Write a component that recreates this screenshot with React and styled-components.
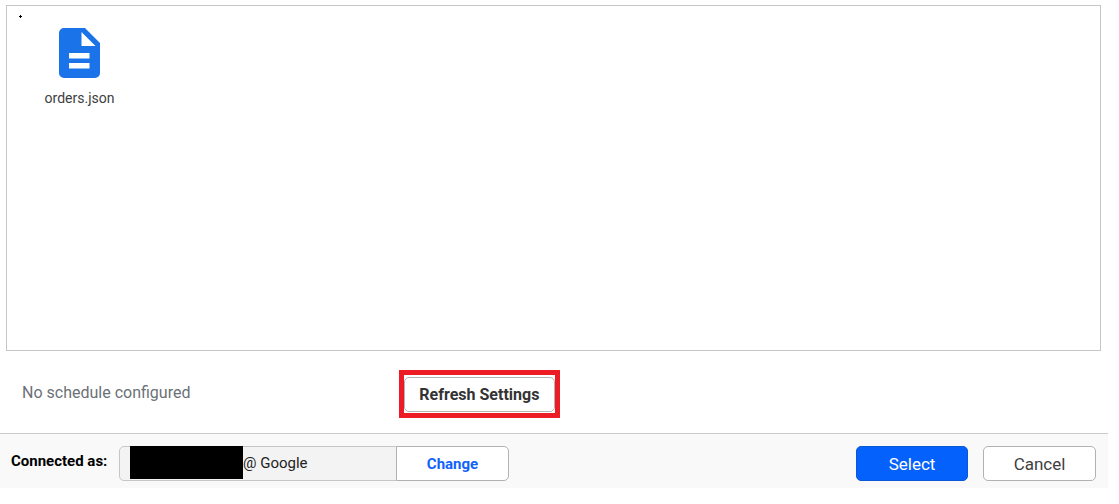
import React from 'react';
import styled, { createGlobalStyle, css } from 'styled-components';

const GlobalStyle = createGlobalStyle`
  *, *::before, *::after { box-sizing: border-box; }
  body {
    margin: 0;
    background: #fff;
    color: #404040;
    font-family: Roboto, "Liberation Sans", sans-serif;
    font-size: 14px;
    line-height: 20px;
  }
`;

const Dialog = styled.main`
  display: flex;
  flex-direction: column;
  margin-right: 11px;
`;

const FileBrowser = styled.section`
  min-height: 346px;
  margin: 5px 7px 0 6px;
  border: 1px solid #c6c6c6;
`;

const Path = styled.div`
  display: flex;
  height: 22px;
  padding: 9px 12px 0;
`;

const PathDot = styled.svg`
  display: block;
  width: 3px;
  height: 3px;
`;

const FileList = styled.ul`
  display: flex;
  flex-wrap: wrap;
  margin: 0;
  padding: 0 12px;
  list-style: none;
`;

const FileItem = styled.li`
  display: flex;
  flex-direction: column;
  align-items: center;
  gap: 10px;
  width: 121px;
`;

const FileIcon = styled.svg`
  display: block;
  width: 41px;
  height: 50px;
`;

const ScheduleRow = styled.section`
  display: grid;
  grid-template-columns: 36% 1fr;
  align-items: center;
  padding: 19px 0 15px;
`;

const ScheduleText = styled.p`
  margin: 0;
  padding: 0 0 2px 22px;
  color: #6b7177;
  font-size: 16px;
`;

const Highlight = styled.div`
  justify-self: start;
  padding: 2px 0 1px;
  border: 5px solid #ed1c24;
`;

const variants = {
  primary: css`
    min-width: 112px;
    border-color: #0a58d6;
    background: #0561fc;
    color: #fff;
    font-size: 17px;
  `,
  plain: css`
    font-size: 17px;
  `,
  strong: css`
    min-width: 151px;
    color: #333;
    font-size: 16px;
    font-weight: 700;
  `,
  attached: css`
    margin-left: -1px;
    border-radius: 0 5px 5px 0;
    color: #1162fb;
    font-size: 15px;
    font-weight: 700;
  `,
};

const Button = styled.button`
  display: block;
  min-width: 113px;
  height: 35px;
  padding: 0 8px;
  border: 1px solid #b2b2b2;
  border-radius: 5px;
  background: #fff;
  color: #404040;
  font-family: inherit;
  line-height: 20px;
  cursor: pointer;
  ${({ $variant }) => variants[$variant]}
`;

const Footer = styled.footer`
  display: flex;
  align-items: flex-start;
  justify-content: space-between;
  padding: 12px 12px 7px 11px;
  border-top: 1px solid #cbcbcb;
  background: #f9f9f9;
`;

const Account = styled.div`
  display: flex;
`;

const AccountLabel = styled.span`
  width: 108px;
  padding-top: 5px;
  color: #000;
  font-size: 15px;
  font-weight: 700;
`;

const AccountField = styled.div`
  display: flex;
  width: 278px;
  height: 35px;
  padding-left: 10px;
  border: 1px solid #c6c6c6;
  border-radius: 5px 0 0 5px;
  background: #f3f3f3;
  color: #222;
  font-size: 15px;
  line-height: 33px;
`;

const Redacted = styled.span`
  width: 113px;
  height: 33px;
  margin-top: -1px;
  background: #000;
`;

const Actions = styled.div`
  display: flex;
  gap: 15px;
`;

export default function App() {
  return (
    <>
      <GlobalStyle />
      <Dialog>
        <FileBrowser aria-label="Files">
          <Path>
            <PathDot viewBox="0 0 3 3" aria-hidden="true">
              <path d="M1 0h1v1h1v1H2v1H1V2H0V1h1z" fill="#000" />
            </PathDot>
          </Path>
          <FileList>
            <FileItem>
              <FileIcon viewBox="0 0 41 50" aria-hidden="true">
                <path
                  fill="#1a73e8"
                  fillRule="evenodd"
                  d="M5 0H26L41 15V45a5 5 0 0 1-5 5H5a5 5 0 0 1-5-5V5a5 5 0 0 1 5-5ZM22.5 4V18H36.5ZM10 25V30.5H30.5V25ZM10 35V40.5H30.5V35Z"
                />
              </FileIcon>
              <span>orders.json</span>
            </FileItem>
          </FileList>
        </FileBrowser>

        <ScheduleRow>
          <ScheduleText>No schedule configured</ScheduleText>
          <Highlight>
            <Button type="button" $variant="strong">Refresh Settings</Button>
          </Highlight>
        </ScheduleRow>

        <Footer>
          <Account>
            <AccountLabel>Connected as:</AccountLabel>
            <AccountField>
              <Redacted />
              <span>@ Google</span>
            </AccountField>
            <Button type="button" $variant="attached">Change</Button>
          </Account>
          <Actions>
            <Button type="button" $variant="primary">Select</Button>
            <Button type="button" $variant="plain">Cancel</Button>
          </Actions>
        </Footer>
      </Dialog>
    </>
  );
}
